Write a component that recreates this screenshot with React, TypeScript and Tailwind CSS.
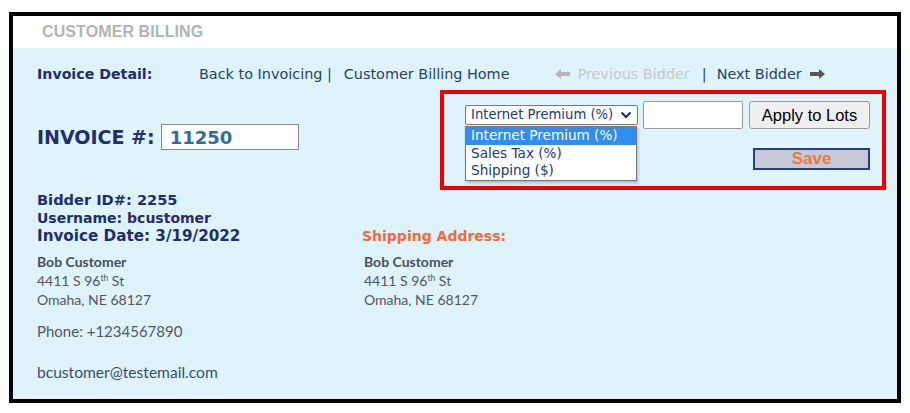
import React from "react";

const navy = "text-[#1c2f6e]";

function ArrowLeft({ color }: { color: string }) {
  return (
    <svg width="15" height="10" viewBox="0 0 15 10" className="inline-block">
      <path d="M0 5 L6 0 L6 3 L15 3 L15 7 L6 7 L6 10 Z" fill={color} />
    </svg>
  );
}

function ArrowRight({ color }: { color: string }) {
  return (
    <svg width="15" height="10" viewBox="0 0 15 10" className="inline-block">
      <path d="M15 5 L9 0 L9 3 L0 3 L0 7 L9 7 L9 10 Z" fill={color} />
    </svg>
  );
}

function Address() {
  return (
    <div className="font-['Lato',sans-serif] text-[14px] leading-[19px] text-[#4f5866]">
      <div className="font-bold text-[#47505e]">Bob Customer</div>
      <div>
        4411 S 96<span className="text-[8.5px] leading-none relative top-[-5px]">th</span> St
      </div>
      <div>Omaha, NE 68127</div>
    </div>
  );
}

export default function App() {
  return (
    <div className="w-[910px] h-[413px] bg-white pt-[12px] pl-[9px]">
      <div className="w-[892px] h-[391px] border-[4px] border-black flex flex-col">
        {/* header */}
        <div className="h-[32px] bg-white flex items-center pl-[29px]">
          <span className="font-['Liberation_Sans',Arial,sans-serif] font-bold text-[16px] text-[#b3b3b3] tracking-[0.1px]">
            CUSTOMER BILLING
          </span>
        </div>
        {/* body */}
        <div className="flex-1 bg-[#dff3fd] pl-[24px] pr-[11px] pt-[17px] font-['DejaVu_Sans',Verdana,sans-serif]">
          {/* nav */}
          <div className="flex items-center h-[18px] text-[14.4px] leading-[18px]">
            <span className={`font-bold ${navy} w-[162px] text-[14.2px]`}>Invoice Detail:</span>
            <span className="text-[#1f3f78]">Back to Invoicing |</span>
            <span className="text-[#1f3f78] ml-[12px]">Customer Billing Home</span>
            <span className="ml-[46px] flex items-center">
              <ArrowLeft color="#b5b5b5" />
            </span>
            <span className="ml-[7px] text-[#c4c9cc]">Previous Bidder</span>
            <span className="ml-[12px] text-[#1f3f78]">|</span>
            <span className="ml-[10px] text-[#1f3f78]">Next Bidder</span>
            <span className="ml-[8px] flex items-center">
              <ArrowRight color="#555" />
            </span>
          </div>

          {/* invoice row */}
          <div className="flex mt-[7px]">
            <div className="w-[403px] pt-[34px] flex items-center self-start">
              <span className={`font-bold text-[19px] ${navy} leading-[26px]`}>INVOICE #:</span>
              <div className="ml-[6px] w-[138px] h-[26px] bg-white border border-[#8a8a8a] flex items-center pl-[8px]">
                <span className="font-bold text-[18px] text-[#2e6d9c]">11250</span>
              </div>
            </div>
            <div className="w-[446px] h-[100px] border-[4px] border-[#ee0000] flex flex-col pt-[7px] pr-[12px]">
              <div className="flex items-center justify-end h-[28px]">
                <div className="relative">
                  <div className="w-[173px] h-[20px] bg-white border border-[#7a7a7a] rounded-[2px] flex items-center pl-[5px] pr-[5px] text-[13.2px] text-[#233a6c]">
                    <span className="flex-1">Internet Premium (%)</span>
                    <svg width="12" height="8" viewBox="0 0 12 8">
                      <path d="M1.5 1.5 L6 6 L10.5 1.5" stroke="#1c2f6e" strokeWidth="2.2" fill="none" />
                    </svg>
                  </div>
                  <div className="absolute left-0 top-[21px] w-[172px] bg-white border border-[#7a7a7a] shadow-[1px_2px_3px_rgba(0,0,0,0.25)] text-[13.6px] leading-[17.5px] text-[#233a6c] z-10">
                    <div className="bg-[#2f8ef0] text-white pl-[5px]">Internet Premium (%)</div>
                    <div className="pl-[5px]">Sales Tax (%)</div>
                    <div className="pl-[5px]">Shipping ($)</div>
                  </div>
                </div>
                <div className="ml-[5px] w-[100px] h-[28px] bg-white border border-[#9a9a9a] rounded-[2px]" />
                <button className="ml-[6px] w-[121px] h-[28px] bg-[#efefef] border border-[#9a9a9a] rounded-[3px] font-['Liberation_Sans',Arial,sans-serif] text-[16.5px] text-black">
                  Apply to Lots
                </button>
              </div>
              <div className="flex justify-end mt-[19px]">
                <div className="w-[117px] h-[22px] bg-[#c6c9d9] border-2 border-[#23407a] flex items-center justify-center font-['Liberation_Sans',Arial,sans-serif] font-bold text-[17px] text-[#f07a38]">
                  Save
                </div>
              </div>
            </div>
          </div>

          {/* bidder info */}
          <div className="flex mt-[1px]">
            <div className="w-[325px]">
              <div className={`font-bold text-[14.6px] leading-[18px] ${navy}`}>
                <div>Bidder ID#: 2255</div>
                <div className="text-[14px]">
                  Username: <span className="text-[#2c2b6b]">bcustomer</span>
                </div>
                <div className="text-[15.2px]">Invoice Date: 3/19/2022</div>
              </div>
              <div className="mt-[7px]">
                <Address />
              </div>
              <div className="mt-[13px] font-['Lato',sans-serif] text-[15px] leading-[19px] text-[#4f5866]">
                Phone: +1234567890
              </div>
              <div className="mt-[22px] font-['Lato',sans-serif] text-[15.6px] leading-[19px] text-[#3b4d6e]">
                bcustomer@testemail.com
              </div>
            </div>
            <div className="pt-[36px]">
              <div className="font-bold text-[14px] leading-[18px] text-[#f26a3c]">Shipping Address:</div>
              <div className="mt-[7px] pl-[2px]">
                <Address />
              </div>
            </div>
          </div>
        </div>
      </div>
    </div>
  );
}
